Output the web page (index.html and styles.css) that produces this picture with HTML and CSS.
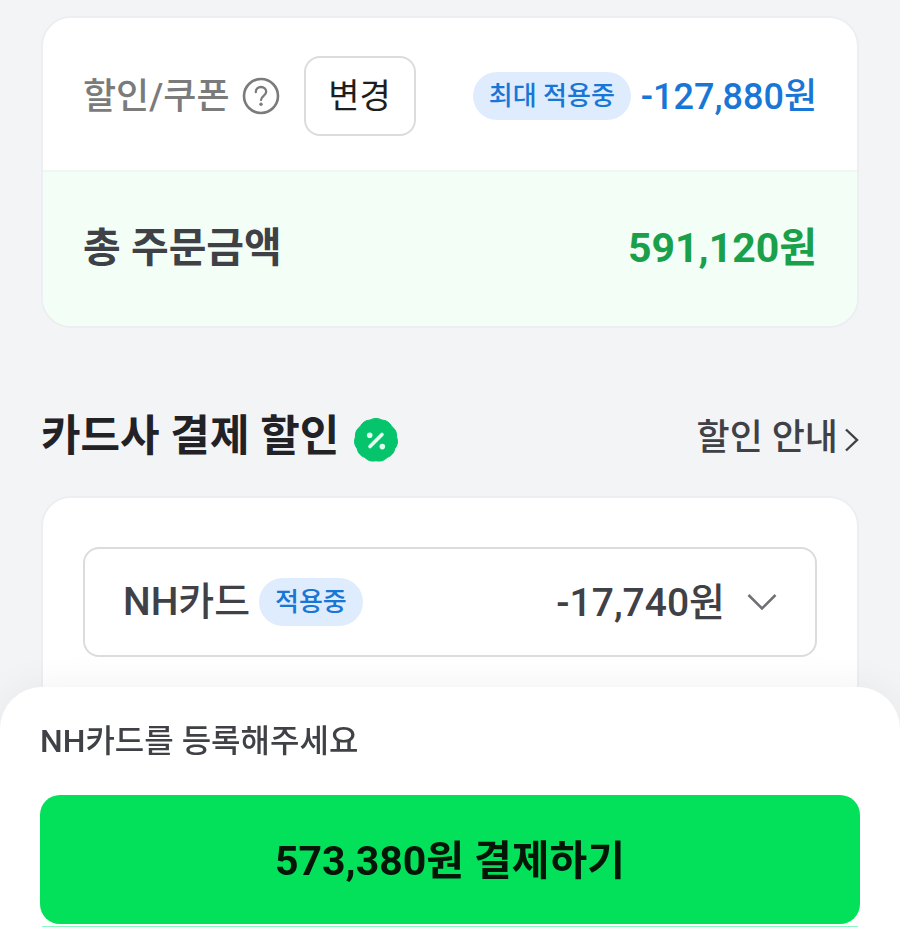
FILE: index.html
```
<!DOCTYPE html>
<html lang="ko">
<head>
  <meta charset="UTF-8" />
  <meta name="viewport" content="width=device-width, initial-scale=1.0"/>
  <title>주문/결제</title>
  <link rel="stylesheet" href="styles.css">
</head>

<body>

<main class="order">
  <section class="card">
    <div class="row">
      <span class="row-label">할인/쿠폰</span>
      <button class="help-btn" type="button" aria-label="할인/쿠폰 도움말">
        <svg width="38" height="38" viewBox="0 0 38 38" fill="none" stroke="#7b7b7b" stroke-linecap="round">
          <circle cx="19" cy="19" r="17" stroke-width="2.6"/>
          <path d="M13.8 15.2C13.8 12 16 10 19 10s5.2 2 5.2 4.8c0 4-5.2 4.2-5.2 8.2" stroke-width="2.3"/>
          <circle cx="19" cy="27.3" r="1.7" fill="#7b7b7b" stroke="none"/>
        </svg>
      </button>
      <button class="change-btn" type="button">변경</button>
      <span class="badge push">최대 적용중</span>
      <span class="discount">-127,880원</span>
    </div>
    <div class="row total">
      <strong class="total-label">총 주문금액</strong>
      <strong class="total-price">591,120원</strong>
    </div>
  </section>

  <section class="card-discount">
    <div class="section-head">
      <h2>카드사 결제 할인</h2>
      <svg class="percent" width="46" height="46" viewBox="0 0 46 46" aria-hidden="true">
        <path fill="#05c46b" stroke="#05c46b" stroke-linejoin="round" d="M17.1 3Q23-.2 28.9 3Q35.6 3.5 38.7 9.4Q44.1 13.3 43.6 20Q46 26.3 41.9 31.6Q40.5 38.2 34.2 40.5Q29.6 45.2 23 43.8Q16.4 45.2 11.8 40.5Q5.5 38.2 4.1 31.6Q0 26.3 2.4 20Q1.9 13.3 7.3 9.4Q10.4 3.5 17.1 3Z"/>
        <path d="M17 29.5L29 17.5" stroke="#e3fff0" stroke-width="3.6" stroke-linecap="round"/>
        <circle cx="16.7" cy="18.3" r="2.8" fill="#e3fff0"/>
        <circle cx="29.3" cy="29.6" r="2.8" fill="#e3fff0"/>
      </svg>
      <a class="guide-link push" href="#">
        <span>할인 안내</span>
        <svg width="15" height="26" viewBox="0 0 15 26" fill="none" stroke="#404146" stroke-width="2.4" aria-hidden="true"><path d="M2 2.5L13 13L2 23.5"/></svg>
      </a>
    </div>

    <div class="card card-list">
      <div class="card-select">
        <select aria-label="결제 카드">
          <option>NH카드</option>
        </select>
        <span class="badge">적용중</span>
        <span class="card-price push">-17,740원</span>
        <svg width="30" height="18" viewBox="0 0 30 18" fill="none" stroke="#707174" stroke-width="2.5" aria-hidden="true"><path d="M1.5 2L15 15.5L28.5 2"/></svg>
      </div>
    </div>
  </section>
</main>

<footer class="pay-sheet">
  <p>NH카드를 등록해주세요</p>
  <button class="pay-btn" type="button">573,380원 결제하기</button>
</footer>

</body>
</html>
```

FILE: styles.css
```
* {
    box-sizing: border-box;
}
body {
    margin: 0;
    min-height: 100vh;
    background: #f3f4f6;
    color: #404146;
    font-family: Roboto, "Noto Sans CJK KR", sans-serif;
    font-weight: 500;
}
button, select {
    font: inherit;
    color: inherit;
    margin: 0;
    padding: 0;
    border: none;
    background: none;
    cursor: pointer;
}
svg {
    flex: none;
    overflow: visible;
}
.push {
    margin-left: auto;
}

.order {
    padding: 16px 41px 0;
}
.card {
    background: #fff;
    border: 2px solid #edeef1;
    border-radius: 30px;
    overflow: hidden;
}
.row {
    display: flex;
    align-items: center;
    height: 152px;
    padding: 4px 40px 0;
    white-space: nowrap;
}
.row-label, .discount, .card-price {
    padding-bottom: 6px;
}
.row-label {
    font-size: 36px;
    color: #7b7b7b;
}
.help-btn {
    display: flex;
    margin: 0 24px 0 12px;
}
.change-btn {
    width: 112px;
    height: 80px;
    padding-bottom: 6px;
    border: 2px solid #dcdcdc;
    border-radius: 16px;
    font-size: 34px;
    font-weight: 400;
    color: #1e1e20;
}
.badge {
    height: 48px;
    padding: 0 16px;
    border-radius: 24px;
    background: #deecfd;
    color: #1877d6;
    font-size: 26px;
    line-height: 48px;
}
.discount {
    margin-left: 10px;
    font-size: 36px;
    color: #1877d6;
}
.total {
    justify-content: space-between;
    height: 156px;
    padding: 0 40px 10px;
    border-top: 2px solid #edf8f1;
    background: #f2fef6;
    font-size: 41px;
}
.total-price {
    color: #1a9f4b;
}

.section-head {
    display: flex;
    align-items: center;
    padding: 86px 0 30px;
    white-space: nowrap;
    line-height: 44px;
}
.section-head h2 {
    margin: 0 14px 8px 0;
    font-size: 43px;
    color: #222226;
}
.guide-link {
    display: flex;
    align-items: center;
    gap: 6px;
    font-size: 36px;
    color: #404146;
    text-decoration: none;
}
.guide-link span {
    padding-bottom: 4px;
}

.card-list {
    padding: 49px 40px 80px;
}
.card-select {
    display: flex;
    align-items: center;
    height: 110px;
    padding: 0 38px;
    border: 2px solid #dcdcdc;
    border-radius: 16px;
    white-space: nowrap;
}
.card-select select {
    appearance: none;
    margin-right: 8px;
    font-size: 39px;
}
.card-price {
    margin-right: 22px;
    font-size: 39px;
}

/* Payment bar stays over the scrolling order */
.pay-sheet {
    position: fixed;
    left: 0;
    right: 0;
    bottom: 0;
    padding: 30px 40px 0;
    background: #fff;
    border-radius: 42px 42px 0 0;
    box-shadow: 0 0 40px rgba(0, 0, 0, 0.06);
}
.pay-sheet p {
    margin: 0 0 30px;
    font-size: 32px;
    line-height: 48px;
}
.pay-btn {
    display: block;
    width: 100%;
    height: 129px;
    padding-bottom: 6px;
    border-radius: 20px;
    background: #03e15b;
    color: #051507;
    font-size: 41px;
    font-weight: 700;
}
.pay-sheet::after {
    content: "";
    display: block;
    height: 1px;
    margin: 2px 2px 0;
    background: #8df7c2;
}
```
